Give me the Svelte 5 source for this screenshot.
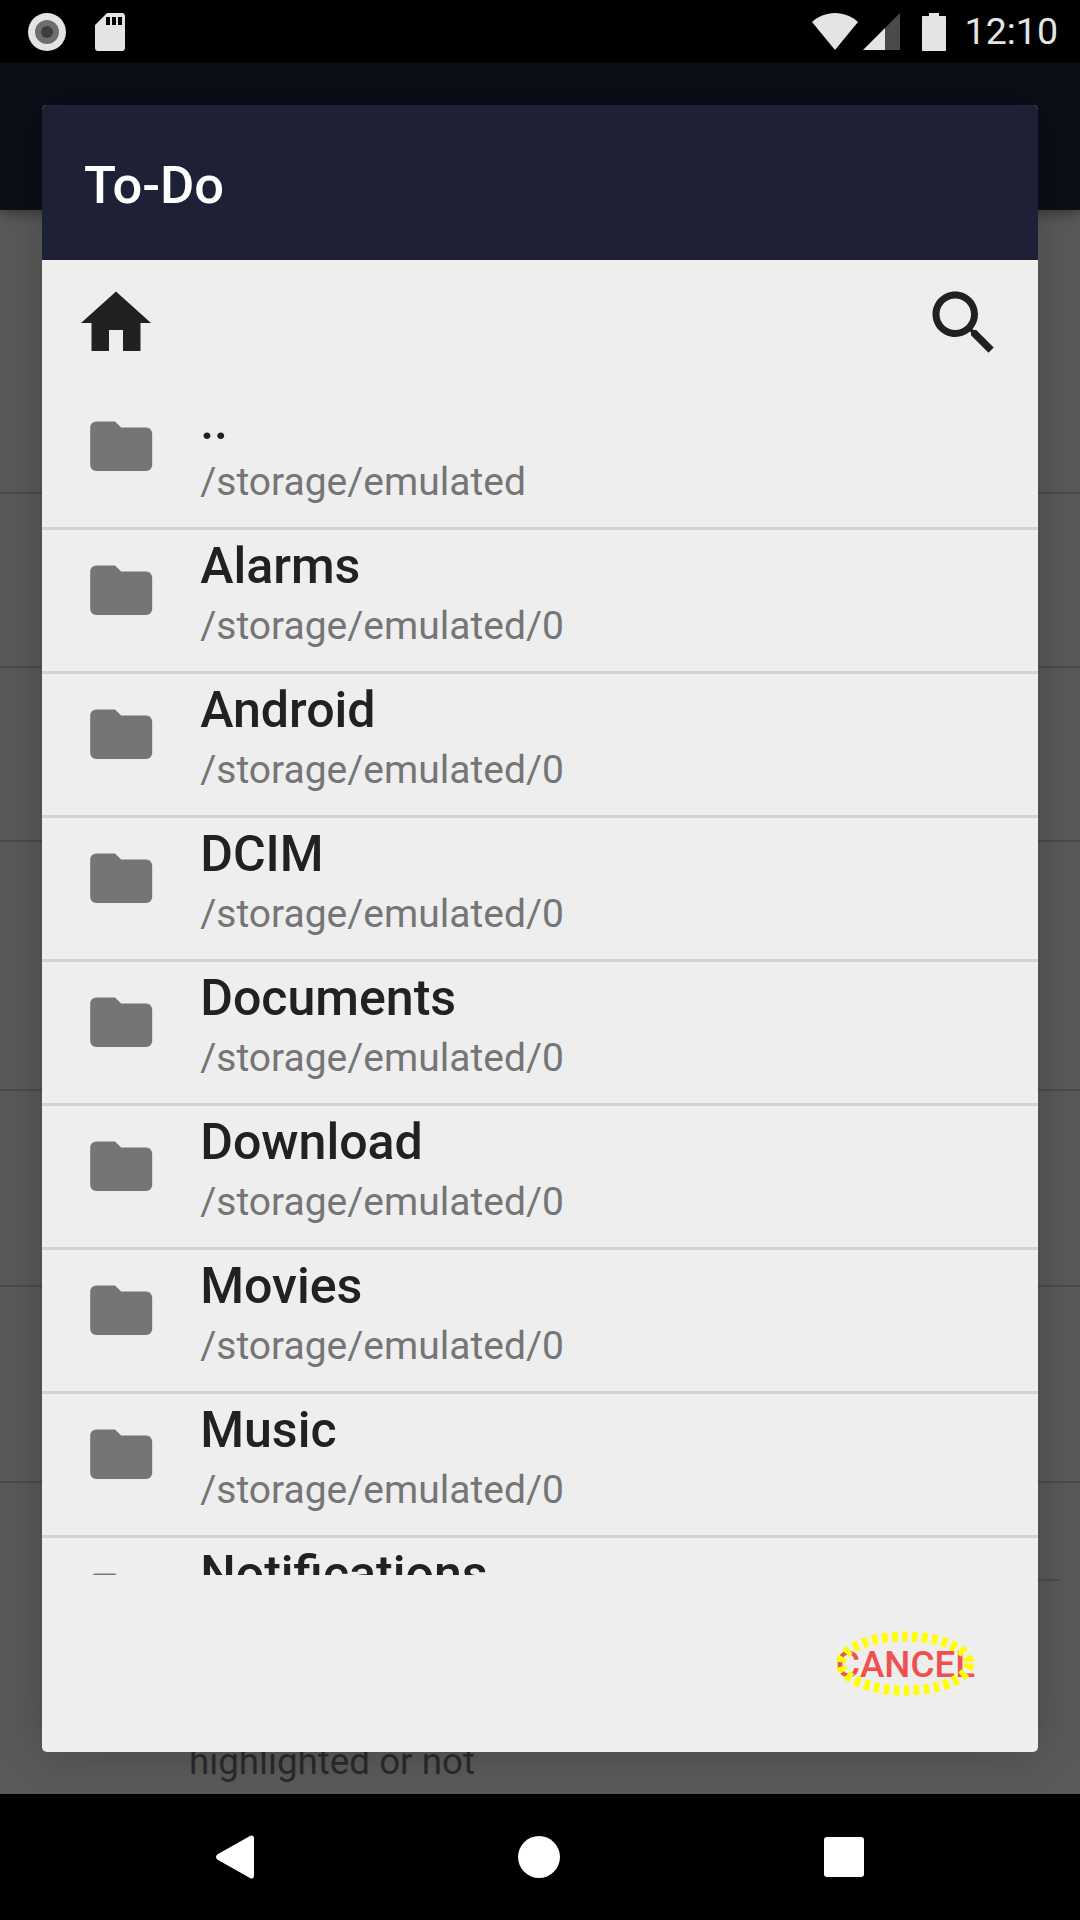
<script>
  const folders = [
    { name: '..', path: '/storage/emulated' },
    { name: 'Alarms', path: '/storage/emulated/0' },
    { name: 'Android', path: '/storage/emulated/0' },
    { name: 'DCIM', path: '/storage/emulated/0' },
    { name: 'Documents', path: '/storage/emulated/0' },
    { name: 'Download', path: '/storage/emulated/0' },
    { name: 'Movies', path: '/storage/emulated/0' },
    { name: 'Music', path: '/storage/emulated/0' },
    { name: 'Notifications', path: '/storage/emulated/0' }
  ];

  // heights of the dimmed task rows behind the dialog
  const taskRows = [284, 174, 174, 249, 196, 196];
</script>

<div class="screen">
  <header class="status-bar">
    <div class="status-left">
      <svg class="rec" viewBox="0 0 38 38" width="38" height="38">
        <circle cx="19" cy="19" r="19" fill="#e4e4e4" />
        <circle cx="19" cy="19" r="12" fill="#6e6e6e" />
        <circle cx="19" cy="19" r="6" fill="#3d3d3d" />
      </svg>
      <svg class="sd" viewBox="0 0 30 38" width="30" height="38">
        <path fill="#e4e4e4" fill-rule="evenodd" d="M12 0h15c1.700 0 3 1.300 3 3v32c0 1.700-1.300 3-3 3H3c-1.700 0-3-1.300-3-3V12zM11 4v8h4V4zM17 4v8h4V4zM23 4v8h4V4z" />
      </svg>
    </div>
    <div class="status-right">
      <svg class="wifi" viewBox="0 0 46 37" width="46" height="37">
        <path fill="#e4e4e4" d="M23 37 0 9C6 3.500 14 0 23 0s17 3.500 23 9z" />
      </svg>
      <svg class="signal" viewBox="0 0 37 37" width="37" height="37">
        <path fill="#4a4a4a" d="M37 0v37H22V15z" />
        <path fill="#e4e4e4" d="M22 15v22H0z" />
      </svg>
      <svg class="battery" viewBox="0 0 24 38" width="24" height="38">
        <path fill="#e4e4e4" d="M7 0h10v3h6c.6 0 1 .4 1 1v33c0 .6-.4 1-1 1H1c-.6 0-1-.4-1-1V4c0-.6.4-1 1-1h6z" />
      </svg>
      <span class="clock">12:10</span>
    </div>
  </header>

  <div class="app-bar"></div>

  <div class="task-list">
    {#each taskRows as height, i (i)}
      <div class="task-row" style="height: {height}px"></div>
    {/each}
    <div class="task-divider"></div>
    <div class="task-note">highlighted or not</div>
  </div>

  <div class="dialog">
    <div class="dialog-title">To-Do</div>
    <div class="toolbar">
      <svg viewBox="0 0 24 24" width="84" height="84">
        <path fill="#212121" d="M10 20v-6h4v6h5v-8h3L12 3 2 12h3v8z" />
      </svg>
      <svg viewBox="0 0 24 24" width="84" height="84">
        <path fill="#212121" d="M15.500 14h-.79l-.28-.27C15.410 12.590 16 11.110 16 9.500 16 5.910 13.090 3 9.500 3S3 5.910 3 9.500 5.910 16 9.500 16c1.610 0 3.090-.59 4.230-1.570l.27.28v.79l5 4.990L20.490 19l-4.990-5zm-6 0C7.010 14 5 11.990 5 9.500S7.010 5 9.500 5 14 7.010 14 9.500 11.990 14 9.500 14z" />
      </svg>
    </div>
    <ul class="folder-list">
      {#each folders as folder (folder.name)}
        <li class="folder-row">
          <svg class="folder-icon" viewBox="0 0 24 24" width="74.400" height="74.400">
            <path fill="#757575" d="M10 4H4c-1.100 0-1.990.9-1.990 2L2 18c0 1.100.9 2 2 2h16c1.100 0 2-.9 2-2V8c0-1.100-.9-2-2-2h-8l-2-2z" />
          </svg>
          <div class="folder-text">
            <div class="folder-name">{folder.name}</div>
            <div class="folder-path">{folder.path}</div>
          </div>
        </li>
      {/each}
    </ul>
    <div class="dialog-actions">
      <button class="cancel">
        CANCEL
        <svg class="focus-ring" viewBox="0 0 138 66" width="138" height="66">
          <ellipse cx="69" cy="32.500" rx="64" ry="27" fill="none" stroke="#ffff00" stroke-width="10" stroke-dasharray="5.500 4.500" />
        </svg>
      </button>
    </div>
  </div>

  <nav class="nav-bar">
    <svg viewBox="0 0 38 44" width="38" height="44">
      <path fill="#fff" d="M34 1c2-1.500 4 0 4 2v38c0 2-2 3.500-4 2L2 25c-2.600-1.600-2.600-4.400 0-6z" />
    </svg>
    <svg viewBox="0 0 42 42" width="42" height="42">
      <circle cx="21" cy="21" r="21" fill="#fff" />
    </svg>
    <svg viewBox="0 0 40 40" width="40" height="40">
      <rect width="40" height="40" rx="3" fill="#fff" />
    </svg>
  </nav>
</div>

<style>
  :global(body) {
    margin: 0;
    background: #5a5a5a;
  }

  .screen {
    position: relative;
    width: 1080px;
    height: 1920px;
    overflow: hidden;
    display: flex;
    flex-direction: column;
    background: #5a5a5a;
    font-family: Roboto, "Liberation Sans", sans-serif;
  }

  .status-bar {
    height: 63px;
    flex: none;
    background: #000;
    display: flex;
    justify-content: space-between;
    align-items: center;
    padding: 0 22px 0 28px;
  }

  .status-left {
    display: flex;
    align-items: center;
    gap: 29px;
  }

  .status-right {
    display: flex;
    align-items: center;
  }

  .wifi {
    margin-right: 5px;
  }

  .battery {
    margin-left: 22px;
    margin-right: 19px;
  }

  .clock {
    font-size: 37.500px;
    color: #e4e4e4;
    line-height: 63px;
  }

  .app-bar {
    height: 147px;
    flex: none;
    background: #0c0e18;
    box-shadow: 0 4px 12px rgba(0, 0, 0, 0.35);
    position: relative;
  }

  .task-list {
    flex: 1;
    min-height: 0;
    overflow: hidden;
  }

  .task-row {
    box-sizing: border-box;
    border-bottom: 2px solid #4c4c4c;
  }

  .task-divider {
    height: 96px;
    margin: 0 21px 0 189px;
    border-bottom: 2px solid #4c4c4c;
  }

  .task-note {
    padding: 159px 0 0 189px;
    font-size: 36.750px;
    line-height: 44px;
    color: #2a2a2a;
    white-space: nowrap;
  }

  .dialog {
    position: absolute;
    left: 42px;
    top: 105px;
    width: 996px;
    height: 1647px;
    display: flex;
    flex-direction: column;
    background: #eeeeee;
    border-radius: 5px;
    overflow: hidden;
    box-shadow: 0 0 50px rgba(0, 0, 0, 0.22);
  }

  .dialog-title {
    height: 155px;
    flex: none;
    box-sizing: border-box;
    background: #1e2136;
    color: #fff;
    font-size: 52.500px;
    font-weight: 500;
    line-height: 155px;
    padding: 3px 0 0 42px;
  }

  .toolbar {
    height: 126px;
    flex: none;
    display: flex;
    justify-content: space-between;
    align-items: flex-start;
    box-sizing: border-box;
    padding: 21px 32px 0 32px;
  }

  .folder-list {
    list-style: none;
    margin: 0;
    padding: 0;
    height: 1189px;
    flex: none;
    overflow: hidden;
  }

  .folder-row {
    box-sizing: border-box;
    height: 144px;
    border-bottom: 3px solid #d2d2d2;
    display: flex;
    align-items: flex-start;
  }

  .folder-icon {
    flex: none;
    margin: 22.600px 0 0 41.800px;
  }

  .folder-text {
    margin-left: 42px;
  }

  .folder-name {
    font-size: 50.100px;
    font-weight: 500;
    line-height: 56px;
    margin-top: 8px;
    color: #212121;
  }

  .folder-path {
    font-size: 39px;
    line-height: 44px;
    margin-top: 10px;
    color: #757575;
  }

  .dialog-actions {
    flex: 1;
    display: flex;
    justify-content: flex-end;
    padding: 56px 64px 0 0;
  }

  .cancel {
    position: relative;
    width: 138px;
    height: 66px;
    padding: 0;
    border: none;
    background: none;
    font: inherit;
    font-size: 36.750px;
    font-weight: 500;
    color: #f15050;
    white-space: nowrap;
  }

  .focus-ring {
    position: absolute;
    left: 0;
    top: 0;
  }

  .nav-bar {
    position: absolute;
    left: 0;
    right: 0;
    bottom: 0;
    height: 126px;
    background: #000;
    display: flex;
    justify-content: center;
    align-items: center;
    gap: 264px;
  }
</style>
